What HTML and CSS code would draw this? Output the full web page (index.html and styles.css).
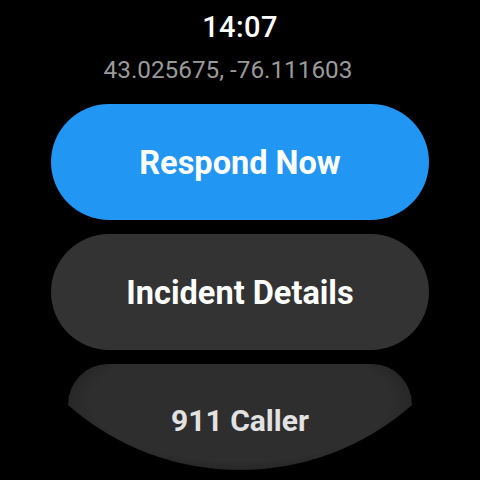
FILE: index.html
```html
<!DOCTYPE html>
<html>
<head>
<meta charset="utf-8">
<link rel="stylesheet" href="styles.css">
</head>
<body>
<div class="screen">
  <div class="time">14:07</div>
  <div class="coords">43.025675, -76.111603</div>
  <div class="list">
    <div class="chip primary">Respond Now</div>
    <div class="chip secondary">Incident Details</div>
    <div class="chip scaled">911 Caller</div>
  </div>
</div>
</body>
</html>
```
FILE: styles.css
```css
html, body {
  margin: 0;
  padding: 0;
  background: #000;
}
.screen {
  width: 480px;
  height: 480px;
  overflow: hidden;
  display: flex;
  flex-direction: column;
  align-items: center;
  font-family: Roboto, "Noto Sans", sans-serif;
}
.time {
  margin-top: 10px;
  height: 34px;
  line-height: 34px;
  font-size: 29px;
  font-weight: 500;
  color: #fff;
  letter-spacing: 0.4px;
}
.coords {
  margin-top: 12px;
  margin-right: 24px;
  height: 28px;
  line-height: 28px;
  font-size: 24.3px;
  color: #9a9a9a;
}
.list {
  margin-top: 20px;
  display: flex;
  flex-direction: column;
  align-items: center;
  gap: 14px;
}
.chip {
  width: 378px;
  height: 116px;
  border-radius: 58px;
  display: flex;
  align-items: center;
  justify-content: center;
  font-weight: 700;
  font-size: 32.5px;
  color: #fff;
  padding-top: 2px;
  box-sizing: border-box;
}
.primary {
  background: #2196f3;
}
.secondary {
  background: #333333;
}
.scaled {
  width: 344px;
  height: 106px;
  border-radius: 0;
  clip-path: path("M 40 0 L 304 0 A 40 41 0 0 1 344 41 A 260 260 0 0 1 0 41 A 40 41 0 0 1 40 0 Z");
  background: radial-gradient(ellipse 200px 80px at 50% 35%, #2e2e2e 75%, #1e1e1e 100%);
  font-size: 30px;
  color: #e2e2e2;
  padding-top: 6px;
}
```
